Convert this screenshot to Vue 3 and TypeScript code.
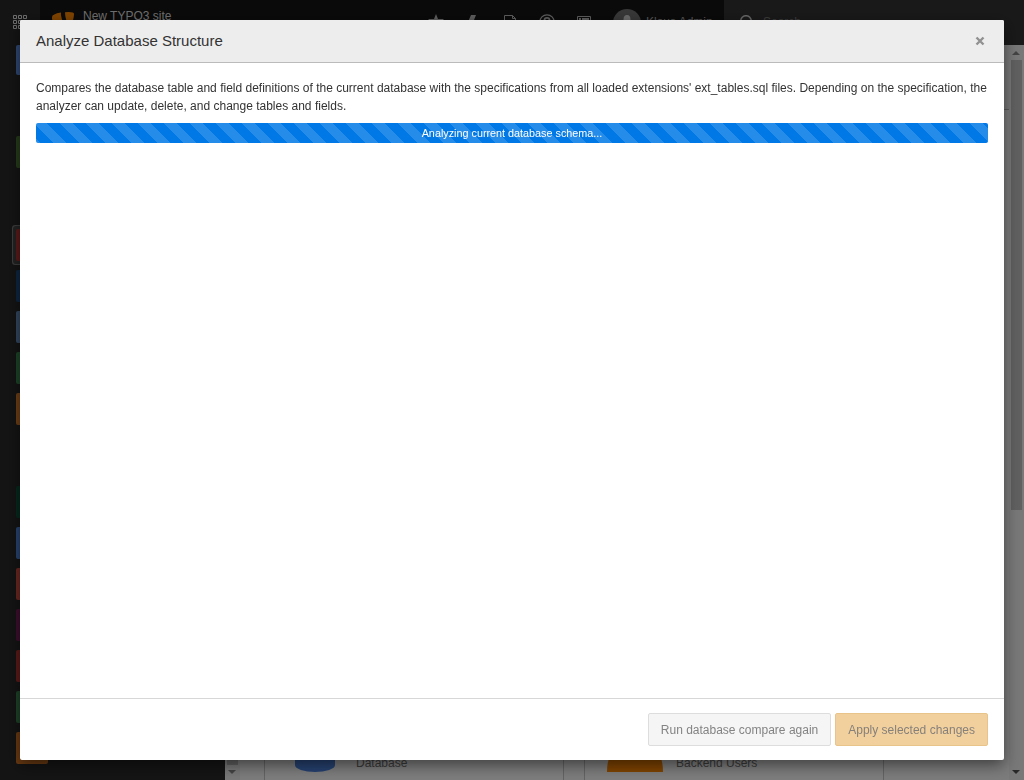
<script setup lang="ts">
interface ModuleIcon { color: string; height: number; gap: number; active?: boolean }

const modules: ModuleIcon[] = [
  { color: '#5f90e8', height: 30, gap: 0 },
  { color: '#4d7a35', height: 32, gap: 61 },
  { color: '#b83434', height: 32, gap: 61, active: true },
  { color: '#1c4d85', height: 32, gap: 9 },
  { color: '#6690c0', height: 32, gap: 9 },
  { color: '#3b8850', height: 32, gap: 9 },
  { color: '#dd7f2c', height: 32, gap: 9 },
  { color: '#0c533b', height: 32, gap: 61 },
  { color: '#5288e0', height: 32, gap: 9 },
  { color: '#d95042', height: 32, gap: 9 },
  { color: '#7c1e5c', height: 32, gap: 9 },
  { color: '#bb3434', height: 32, gap: 9 },
  { color: '#3c8550', height: 32, gap: 9 },
  { color: '#d37424', height: 32, gap: 9 },
]
</script>

<template>
  <div class="page">
    <header class="topbar">
      <div class="toggle">
        <svg width="14" height="14" viewBox="0 0 14 14" fill="none" stroke="#ddd">
          <path d="M.5.5h3v3h-3zM5.5.5h3v3h-3zM10.5.5h3v3h-3zM.5 5.5h3v3h-3zM5.5 5.5h3v3h-3zM10.5 5.5h3v3h-3zM.5 10.5h3v3h-3zM5.5 10.5h3v3h-3zM10.5 10.5h3v3h-3z" />
        </svg>
      </div>
      <div class="brand">
        <svg width="22" height="24" viewBox="0 0 22 24" fill="#ff8700">
          <path d="M0 5Q0 2 9 .5Q8 5 14 16l2 5-4 2Q4 20 0 7z" />
          <path d="M13 .3Q22-.5 22 2Q22 8 18 14Q13 9 13 .3z" />
        </svg>
        <span class="site">New TYPO3 site</span>
      </div>
      <div class="tools">
        <svg width="16" height="16" viewBox="0 0 16 16" fill="#bbb"><path d="m8 0 2 5h6l-4.400 4 1.700 6L8 11.500 2.700 15l1.700-6L0 5h6z" /></svg>
        <svg width="16" height="16" viewBox="0 0 16 16" fill="#bbb"><path d="M6 1h5L9 6H12L4 15l1-7H3z" /></svg>
        <svg width="16" height="16" viewBox="0 0 16 16" fill="none" stroke="#bbb"><path d="M2.500 15.500v-14h8l3 3v11zM10.500 1.500v3h3" /></svg>
        <svg width="16" height="16" viewBox="0 0 16 16" fill="none" stroke="#bbb"><circle cx="8" cy="8" r="7.200" stroke-width="1.300" /><path d="M5.500 6Q5.500 3.800 8 3.800T10.500 6Q10.500 7.500 8 8.500v2" stroke-width="1.800" /></svg>
        <svg width="16" height="16" viewBox="0 0 16 16" fill="none" stroke="#bbb"><path d="M1.500 2.500h13v12h-13z" /><path d="M3 5h2M6 5h7M3 8h2M6 8h7" stroke-width="2" /></svg>
      </div>
      <div class="user">
        <svg width="28" height="28" viewBox="0 0 28 28"><circle cx="14" cy="14" r="14" fill="#707070" /><ellipse cx="14" cy="10.500" rx="3.500" ry="4.500" fill="#d5d5d5" /><path d="M6 24q0-9 8-9t8 9z" fill="#d5d5d5" /></svg>
        <span>Klaus Admin</span>
      </div>
      <div class="search">
        <svg width="16" height="16" viewBox="0 0 16 16" fill="none" stroke="#ccc" stroke-width="1.500"><circle cx="6" cy="6" r="5.300" /><path d="m10 10 5 5" /></svg>
        <span>Search</span>
      </div>
    </header>

    <div class="body">
      <nav class="modules">
        <div
          v-for="(m, i) in modules"
          :key="i"
          class="module"
          :class="{ active: m.active }"
          :style="{ marginTop: m.gap + 'px', height: m.height + 'px', '--tile': m.color }"
        ><i class="tile"></i></div>
      </nav>
      <div class="scroll tree-scroll">
        <i class="thumb"></i>
        <i class="arrow down"></i>
      </div>
      <main class="content">
        <div class="docheader"></div>
        <div class="cards">
          <section class="card">
            <svg width="40" height="56" viewBox="0 0 40 56" fill="#4c83e0"><path d="M0 7a20 7 0 0 1 40 0v42a20 7 0 0 1-40 0z" /></svg>
            <span class="first">Database</span>
          </section>
          <section class="card">
            <svg class="users" width="56" height="56" viewBox="0 0 56 56" fill="#ff8700"><circle cx="28" cy="17" r="14" /><path d="M0 56Q0 33 15 33h26q15 0 15 23z" /></svg>
            <span>Backend Users</span>
          </section>
        </div>
      </main>
      <div class="scroll">
        <i class="arrow up"></i>
        <i class="thumb long"></i>
        <i class="arrow down dark"></i>
      </div>
    </div>
  </div>

  <div class="backdrop">
    <div class="modal" role="dialog">
      <header class="modal-header">
        <h4>Analyze Database Structure</h4>
        <button class="close" aria-label="Close">
          <svg width="10" height="10" viewBox="0 0 10 10" stroke="#919191" stroke-width="2.400"><path d="m1.500 1.500 7 7M8.500 1.500l-7 7" /></svg>
        </button>
      </header>
      <div class="modal-body">
        <p>Compares the database table and field definitions of the current database with the specifications from all loaded extensions' ext_tables.sql files. Depending on the specification, the analyzer can update, delete, and change tables and fields.</p>
        <div class="progress">Analyzing current database schema...</div>
      </div>
      <footer class="modal-footer">
        <button class="btn" disabled>Run database compare again</button>
        <button class="btn warning" disabled>Apply selected changes</button>
      </footer>
    </div>
  </div>
</template>

<style>
body { margin: 0; overflow: hidden; }
</style>

<style scoped>
* { box-sizing: border-box; }
.page, .backdrop { font-family: "Liberation Sans", Arial, sans-serif; font-size: 12px; line-height: 18px; }
.page { height: 780px; overflow: hidden; display: flex; flex-direction: column; background: #f5f5f5; }
svg { display: block; flex: none; }
.topbar { height: 45px; flex: none; display: flex; background: #151515; color: #ddd; }
.toggle { width: 40px; padding: 15px 0 0 13px; background: #292929; }
.brand { width: 378px; display: flex; padding: 12px 0 0 12px; }
.site { margin: -5px 0 0 9px; }
.tools { display: flex; gap: 21px; padding: 14px 0 0 10px; width: 195px; }
.user { display: flex; width: 111px; padding-top: 9px; gap: 5px; color: #aaa; }
.user span { margin-top: 4px; white-space: nowrap; }
.search { flex: 1; display: flex; gap: 7px; padding: 15px 0 0 16px; background: #333; color: #777; }
.search span { margin-top: -2px; }
.body { flex: 1; min-height: 0; display: flex; }
.modules { width: 225px; padding-left: 16px; background: #292929; overflow: hidden; display: flex; flex-direction: column; }
.module { flex: none; width: 32px; }
.tile { display: block; height: 100%; border-radius: 2px; background: var(--tile); }
.active { background: #454545; box-shadow: 0 0 0 3px #454545, 0 0 0 4px #7a7a7a; border-radius: 1px; }
.scroll { width: 15px; flex: none; display: flex; flex-direction: column; align-items: center; background: #f1f1f1; }
.tree-scroll { justify-content: flex-end; }
.thumb { width: 11px; height: 200px; background: #c1c1c1; }
.thumb.long { height: 450px; margin: 5px 0 auto; }
.arrow { width: 0; height: 0; border: 4px solid transparent; }
.up { border-top: 0; border-bottom-color: #888; margin: 6px 1px 0 0; }
.down { border-bottom: 0; border-top-color: #888; margin: 5px 1px 6px 0; }
.down.dark { border-top-color: #505050; }
.content { flex: 1; display: flex; flex-direction: column; background: #f9f9f9; }
.docheader { height: 65px; flex: none; background: #eee; border-bottom: 1px solid #b5b5b5; }
.cards { flex: none; display: flex; gap: 20px; padding: 590px 0 0 24px; }
.card { width: 300px; height: 100px; flex: none; display: flex; padding: 15px 0 0 30px; border: 1px solid #c7c7c7; background: #fafafa; color: #737373; }
.card .first { margin-left: 21px; }
.card .users { margin-left: -8px; }
.card .users + span { margin-left: 13px; }
.card span { margin-top: 38px; }
.backdrop { position: fixed; inset: 0; padding: 20px; background: rgba(0, 0, 0, .5); }
.modal { height: 740px; display: flex; flex-direction: column; background: #fff; border-radius: 2px; box-shadow: 0 5px 15px rgba(0, 0, 0, .5); color: #333; overflow: hidden; }
.modal-header { height: 43px; flex: none; display: flex; align-items: center; justify-content: space-between; padding: 0 16px; background: #ededed; border-bottom: 1px solid #bbb; }
h4 { margin: 0; font-size: 15px; font-weight: 400; line-height: 18px; }
.close { border: 0; background: none; padding: 0; margin-right: 3px; }
.modal-body { flex: 1; padding: 16px; }
p { margin: 0 0 8px; }
.progress { height: 20px; border-radius: 2px; color: #fff; font-size: 10.8px; line-height: 20px; text-align: center; background: #0078e6 linear-gradient(45deg, rgba(255, 255, 255, .15) 25%, transparent 25%, transparent 50%, rgba(255, 255, 255, .15) 50%, rgba(255, 255, 255, .15) 75%, transparent 75%) -3px 0 / 26px 26px; }
.modal-footer { height: 62px; display: flex; gap: 4px; justify-content: flex-end; padding: 14px 16px; border-top: 1px solid #d7d7d7; }
.btn { height: 33px; padding: 0 12px; font: 12px/18px "Liberation Sans", Arial, sans-serif; color: #838383; background: #f5f5f5; border: 1px solid #ddd; border-radius: 2px; }
.warning { background: #f2d09e; border-color: #e9c48a; color: #86807a; }
</style>
